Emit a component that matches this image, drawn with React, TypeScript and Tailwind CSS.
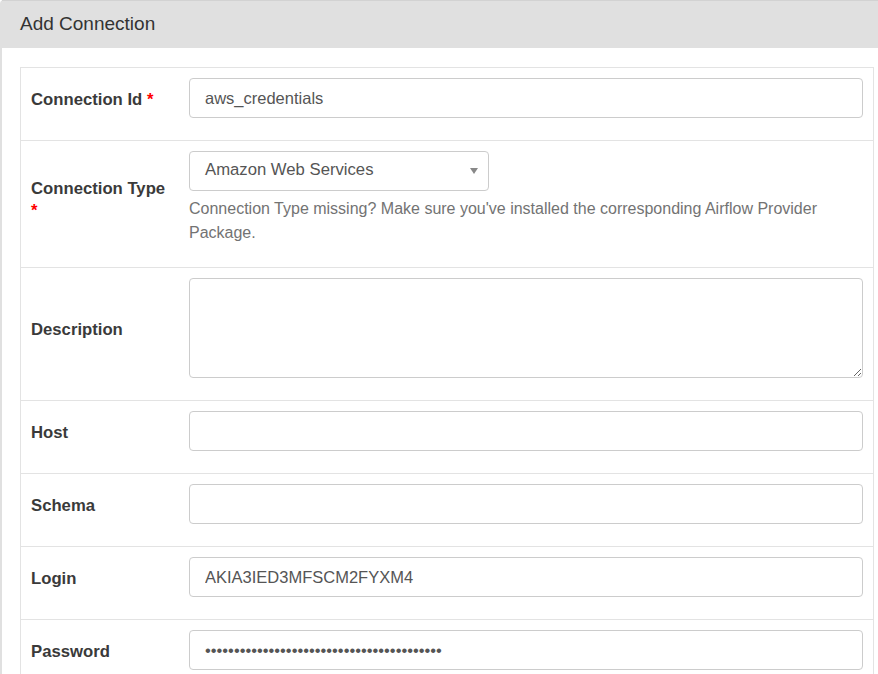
import { ReactNode } from "react";

const Row = ({ label, required, children }: { label: string; required?: boolean; children: ReactNode }) => {
  return (
    <div className="grid grid-cols-[158px_1fr] border-t border-[#e3e3e3] first:border-t-0">
      <div className="flex items-center px-[10px] pt-[14px] pb-[22px]">
        <label className="font-bold text-[16.7px] leading-[22px] text-[#3a3a3a]">
          {label}
          {required && <span className="text-[#ff0000]"> *</span>}
        </label>
      </div>
      <div className="px-[10px] pt-[10px] pb-[22px]">{children}</div>
    </div>
  );
};

const inputCls =
  "block w-full h-[40px] px-[15px] border border-[#cccccc] rounded-[4px] text-[16.5px] text-[#555] bg-white outline-none";

export default function App() {
  const secret = "wJalrXUtnFEMIK7MDENGbPxRfiCYEXAMPLEKEYabc";

  return (
    <div className="w-[878px] h-[674px] overflow-hidden bg-white font-['Liberation_Sans',Arial,sans-serif]">
      <div className="border-l-2 border-[#e0e0e0] rounded-tl-[4px] min-h-[674px]">
        <div className="h-[48px] bg-[#e0e0e0] border-t border-[#d2d2d2] flex items-center pl-[18px] text-[19px] text-[#333]">
          Add Connection
        </div>
        <div className="pl-[18px] pt-[19px]">
          <div className="w-[854px] border border-[#e3e3e3]">
            <Row label="Connection Id" required>
              <input className={inputCls} defaultValue="aws_credentials" />
            </Row>
            <Row label="Connection Type" required>
              <div className="relative w-[300px] h-[40px] border border-[#cccccc] rounded-[4px] flex items-center pl-[15px] pb-[3px] text-[16.7px] text-[#555]">
                Amazon Web Services
                <span className="absolute right-[10px] top-[16px] w-0 h-0 border-l-[4px] border-r-[4px] border-t-[6px] border-l-transparent border-r-transparent border-t-[#888]" />
              </div>
              <p className="mt-[6px] text-[16px] leading-[24px] text-[#737373]">
                Connection Type missing? Make sure you've installed the corresponding Airflow Provider Package.
              </p>
            </Row>
            <Row label="Description">
              <textarea className="block w-full h-[100px] px-[15px] py-[8px] border border-[#cccccc] rounded-[4px] text-[16px] text-[#555] outline-none" />
            </Row>
            <Row label="Host">
              <input className={inputCls} />
            </Row>
            <Row label="Schema">
              <input className={inputCls} />
            </Row>
            <Row label="Login">
              <input className={inputCls} defaultValue="AKIA3IED3MFSCM2FYXM4" />
            </Row>
            <Row label="Password">
              <input type="password" className={inputCls} defaultValue={secret} />
            </Row>
          </div>
        </div>
      </div>
    </div>
  );
}
